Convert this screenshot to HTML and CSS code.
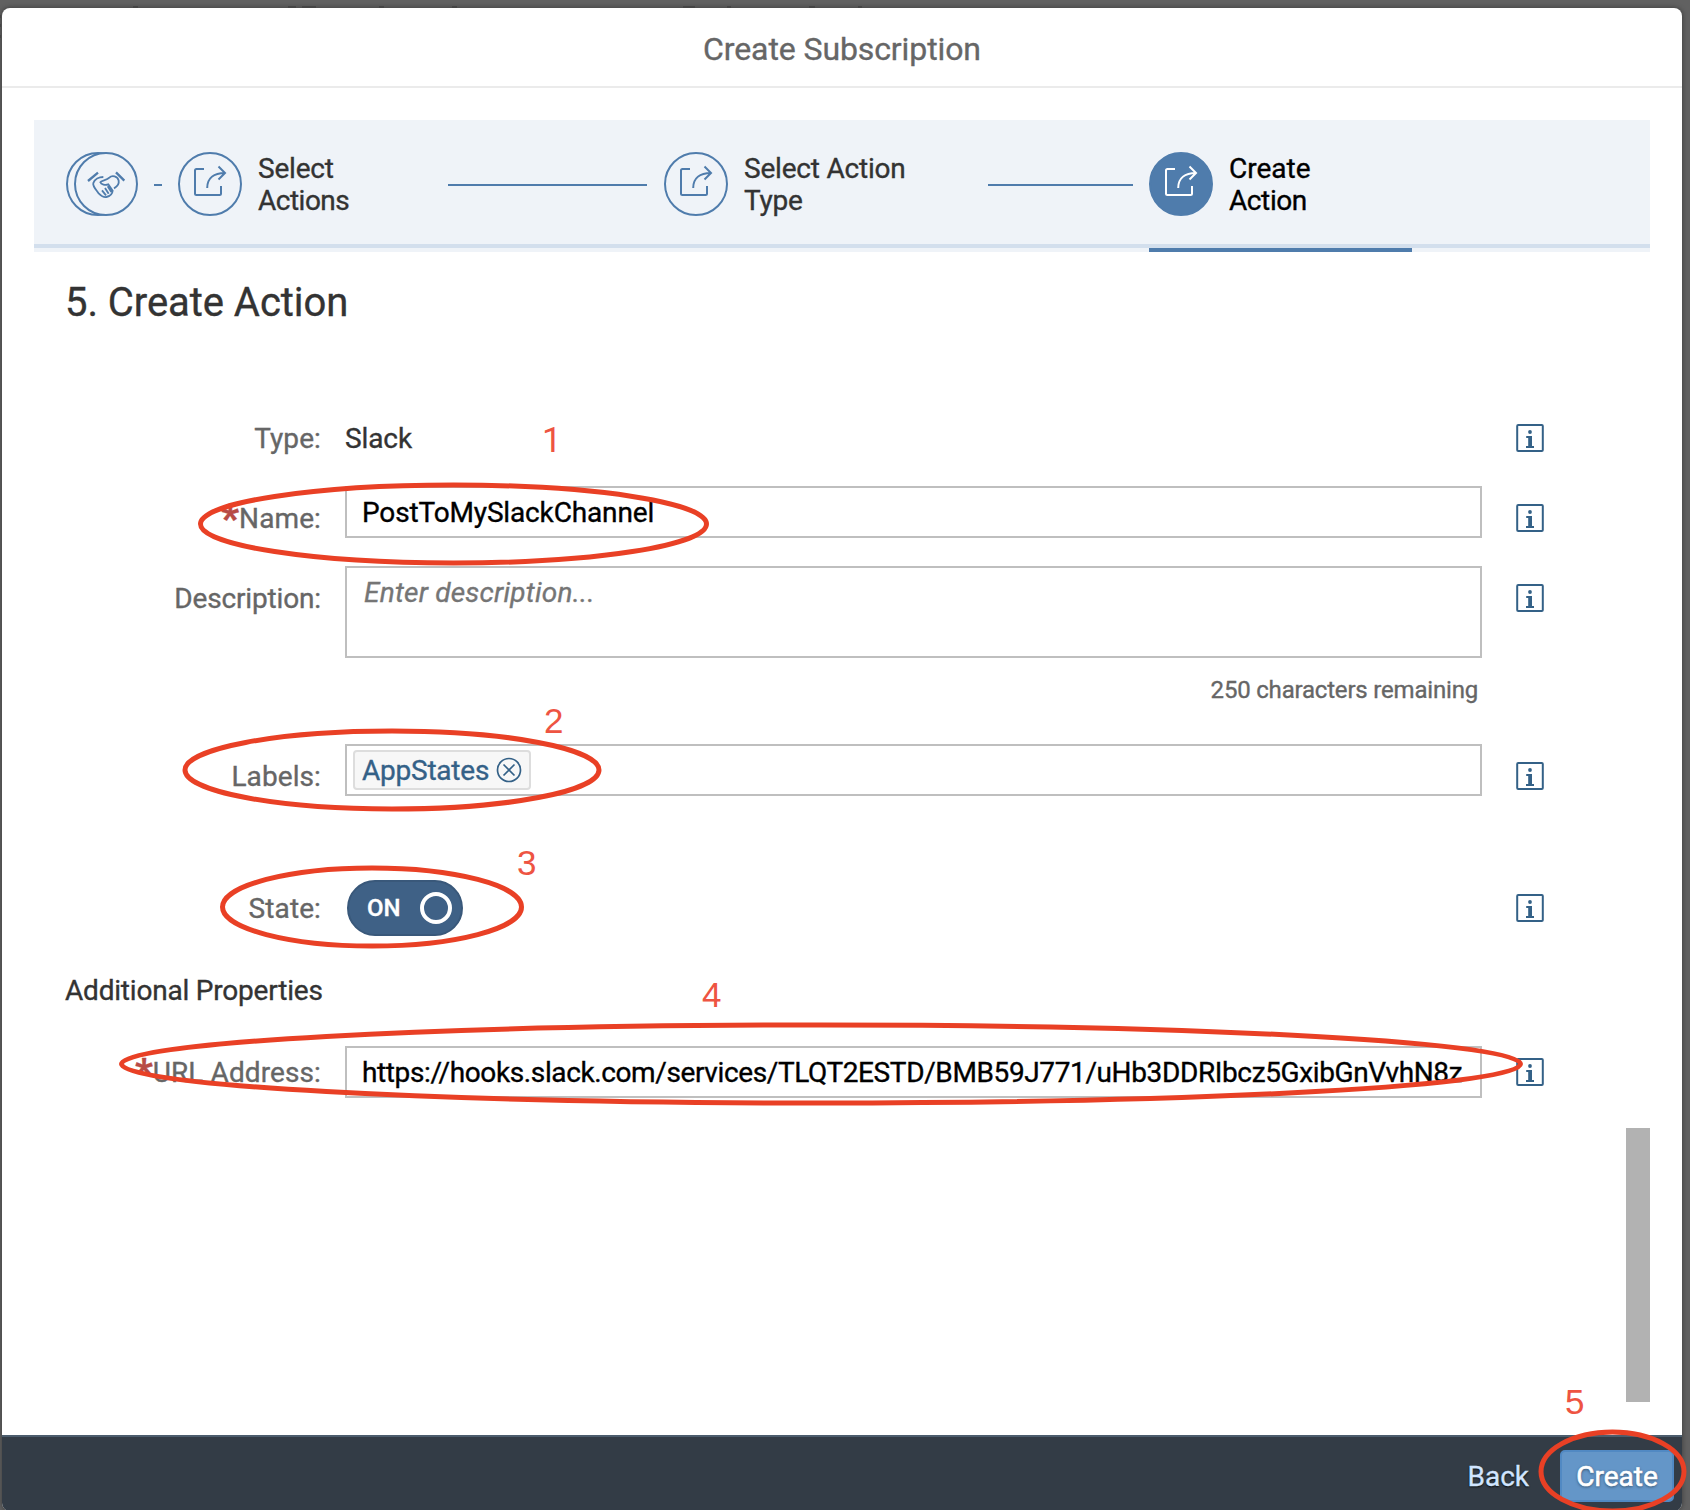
FILE: index.html
```html
<!DOCTYPE html>
<html lang="en">
<head>
<meta charset="utf-8">
<title>Create Subscription</title>
<link rel="stylesheet" href="styles.css">
</head>
<body>
<svg width="0" height="0" class="defs">
  <symbol id="share" viewBox="0 0 64 64">
    <path d="M26 17H18.5a1.5 1.5 0 0 0-1.5 1.5V41.500a1.500 1.500 0 0 0 1.500 1.500H41.500a1.500 1.500 0 0 0 1.500-1.500V34"/>
    <path d="M29.200 36C29.200 26 36 21 47 21M40.500 14.500L47 21L40.500 27.500"/>
  </symbol>
  <symbol id="info" viewBox="0 0 28 28">
    <rect x="1.200" y="1" width="25.600" height="26" rx="1"/>
    <circle class="solid" cx="14" cy="8" r="1.900"/>
    <path class="solid" d="M10.200 12h5.800v10h2v2h-8v-2h2.200v-8h-2z"/>
  </symbol>
</svg>
<div class="dialog">
  <header class="dialog-head">Create Subscription</header>
  <main class="content">
    <nav class="wizard">
      <span class="stack">
        <span class="step-icon back"></span>
        <span class="step-icon front">
          <svg viewBox="0 0 192 192" class="hands">
            <path class="cuff" d="M42 87L72 62M126 61L151 86"/>
            <path d="M88 75C75 75 62 82 58 93C55 102 65 112 74 124C82 132 89 137 97 135C107 133 115 126 116 116L103 97C94 101 81 97 79 91C81 84 98 86 106 77C114 69 131 72 134 86C136 97 129 104 120 109M84 115L96 130M93 108L104 125M101 103L112 120"/>
          </svg>
        </span>
      </span>
      <span class="line dash"></span>
      <span class="step-icon"><svg><use href="#share"/></svg></span>
      <span class="step-text first">Select<br><span class="tight">Actions</span></span>
      <span class="line long"></span>
      <span class="step-icon"><svg><use href="#share"/></svg></span>
      <span class="step-text second">Select Action<br>Type</span>
      <span class="line mid"></span>
      <span class="current">
        <span class="step-icon filled"><svg><use href="#share"/></svg></span>
        <span class="step-text">Create<br><span class="tight">Action</span></span>
      </span>
    </nav>
    <h1>5. Create Action</h1>
    <section class="form">
      <div class="row type">
        <span class="label">Type:</span><span class="value">Slack</span><svg class="info"><use href="#info"/></svg>
      </div>
      <div class="row name">
        <span class="label"><b>*</b>Name:</span><div class="field input post">PostToMySlackChannel</div><svg class="info"><use href="#info"/></svg>
      </div>
      <div class="row desc">
        <span class="label tight-label">Description:</span>
        <div><div class="field area">Enter description...</div><div class="counter">250 characters remaining</div></div>
        <svg class="info"><use href="#info"/></svg>
      </div>
      <div class="row labels">
        <span class="label">Labels:</span>
        <div class="field tokens"><span class="token">AppStates<svg viewBox="0 0 26 26"><circle cx="13" cy="13" r="11.500"/><path d="M7.500 7.500l11 11M18.500 7.500l-11 11"/></svg></span></div>
        <svg class="info"><use href="#info"/></svg>
      </div>
      <div class="row state">
        <span class="label">State:</span>
        <div><div class="switch">ON<span class="knob"></span></div></div>
        <svg class="info"><use href="#info"/></svg>
      </div>
      <h2>Additional Properties</h2>
      <div class="row address">
        <span class="label"><b>*</b>URL Address:</span><div class="field input url">https://hooks.slack.com/services/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</div><svg class="info"><use href="#info"/></svg>
      </div>
    </section>
    <div class="scroll-thumb"></div>
  </main>
  <footer class="dialog-foot">
    <span class="btn">Back</span>
    <span class="btn primary">Create</span>
  </footer>
</div>
<svg class="annotations" viewBox="0 0 1690 1510">
  <path class="behind" d="M133 7h5M288 7h8M302 7h14M379 7h5M452 7h5M683 7h12M727 7h4M809 7h6M858 7h4M0 15v3M0 24v3M0 35v3"/>
  <ellipse cx="453.500" cy="524" rx="253" ry="39"/>
  <ellipse cx="392" cy="770" rx="207" ry="39"/>
  <ellipse cx="372" cy="907" rx="149.500" ry="39"/>
  <ellipse cx="821" cy="1064" rx="699.500" ry="39"/>
  <ellipse cx="1612.500" cy="1471.500" rx="71.500" ry="39.500"/>
  <text class="one" x="542" y="452">1</text>
  <text x="544" y="733">2</text>
  <text x="517" y="875">3</text>
  <text x="702" y="1007">4</text>
  <text x="1565" y="1414">5</text>
</svg>
</body>
</html>
```
FILE: styles.css
```css
* { box-sizing: border-box; }

body {
  margin: 0;
  width: 1690px;
  height: 1510px;
  overflow: hidden;
  padding: 8px 8px 0 2px;
  background: #616161;
  font: 28px/32px Roboto, sans-serif;
  color: #333;
  -webkit-text-stroke: .35px currentColor;
}

.defs { position: absolute; }

svg { fill: none; stroke: currentColor; stroke-width: 2; }
.solid { fill: currentColor; stroke: none; }

.dialog {
  display: flex;
  flex-direction: column;
  width: 1680px;
  height: 1503px;
  background: #fff;
  border-radius: 8px;
  overflow: hidden;
  box-shadow: 0 0 4px 1px #444;
}

.dialog-head {
  height: 80px;
  border-bottom: 2px solid #ebebeb;
  text-align: center;
  font-size: 32px;
  line-height: 83px;
  letter-spacing: -.1px;
  color: #666;
}

.content { flex: 1; padding: 32px 32px 0; }

/* wizard progress */
.wizard {
  display: flex;
  align-items: center;
  height: 132px;
  padding: 0 32px 4px;
  background: linear-gradient(#eff3f8 124px, #d3dfed 124px, #d3dfed 128px, #eff3f8 128px);
  color: #4f7cac;
}

.step-icon {
  display: block;
  flex: none;
  width: 64px;
  height: 64px;
  border-radius: 50%;
  border: 2px solid #4f7cac;
}
.step-icon svg { display: block; width: 64px; height: 64px; margin: -2px; }

.stack { display: flex; width: 72px; }
.front { margin-left: -56px; background: #eff3f8; }
.hands { stroke-width: 5.500; }
.cuff { stroke-width: 7; }
.filled { background: #4f7cac; color: #fff; }

.line { flex: none; height: 2px; background: #4f7cac; margin-top: 2px; }
.dash { width: 8px; margin-left: 16px; margin-right: 16px; }
.long { width: 199px; margin-right: 17px; }
.mid { width: 145px; margin-right: 16px; }

.step-text { margin-left: 16px; padding-top: 2px; color: #333; letter-spacing: -.2px; }
.tight { letter-spacing: -.500px; }
.first { width: 190px; }
.second { width: 244px; }

.current {
  display: flex;
  align-items: center;
  align-self: stretch;
  width: 263px;
  margin-bottom: -4px;
  border-bottom: 4px solid #4f7cac;
}
.current .step-text { color: #000; letter-spacing: 0; }
.current .tight { letter-spacing: -.400px; }

h1 {
  margin: 27px 0 0 31px;
  font-size: 40px;
  line-height: 48px;
  font-weight: 400;
  letter-spacing: -.050px;
}

/* form */
.form { width: 1512px; padding-top: 79px; }

.row {
  display: grid;
  grid-template-columns: 287px 1137px 28px;
  column-gap: 24px;
}
.info { display: block; width: 28px; height: 28px; margin: 18px 0 0 9.500px; color: #346187; }
.label { padding-top: 17px; text-align: right; color: #666; letter-spacing: .1px; }
.tight-label { letter-spacing: -.150px; }
.label b {
  display: inline-block;
  height: 24px;
  color: #b84b46;
  font: 900 38px/38px Roboto, sans-serif;
  vertical-align: top;
  margin-top: -3px;
}
.value { padding-top: 17px; letter-spacing: -.1px; }

.type, .name { height: 80px; }
.desc { height: 178px; }
.labels { height: 132px; }
.state { height: 90px; }

.field { height: 52px; padding: 0 15px; border: 2px solid #bfbfbf; background: #fff; }
.input { color: #000; white-space: nowrap; }
.post { line-height: 49px; letter-spacing: -.150px; }
.url { line-height: 49px; letter-spacing: -.380px; }
.area { height: 92px; padding: 9px 17px 0; font-style: italic; color: #757575; letter-spacing: .230px; }
.counter { margin: 18px 4px 0; text-align: right; font-size: 24px; line-height: 28px; color: #666; letter-spacing: -.190px; }

.tokens { padding: 4px 6px; }
.token {
  display: flex;
  align-items: center;
  width: 178px;
  height: 40px;
  padding: 1px 0 0 7px;
  gap: 7px;
  border: 2px solid #ddd;
  border-radius: 4px;
  background: #f7f7f7;
  color: #346187;
  letter-spacing: -.230px;
}
.token svg { width: 26px; height: 26px; margin-top: -2px; stroke-width: 1.700; }

.switch {
  display: flex;
  align-items: center;
  width: 116px;
  height: 56px;
  margin: 4px 0 0 2px;
  padding-left: 18px;
  border: 2px solid #39587a;
  border-radius: 28px;
  background: #3f6186;
  color: #fff;
  font-size: 24px;
  font-weight: 500;
}
.knob { width: 32px; height: 32px; margin-left: 19px; border: 4px solid #fff; border-radius: 50%; }

h2 { margin: 9px 0 39px 31px; font-size: 28px; line-height: 32px; font-weight: 400; letter-spacing: -.200px; }

.address .label { padding-top: 11px; }
.address .info { margin-top: 12px; }

.scroll-thumb { width: 24px; height: 274px; margin: 30px 0 0 auto; background: #b2b2b2; }

.dialog-foot {
  display: flex;
  justify-content: flex-end;
  height: 76px;
  padding: 13px 8px 0;
  border-top: 2px solid #4c5d6d;
  background: #333c46;
}
.btn { height: 52px; padding: 0 31px; line-height: 53px; color: #d1e5ff; text-shadow: 0 1px 2px #000; }
.primary {
  width: 114px;
  padding: 0;
  text-align: center;
  border: 2px solid #5189c3;
  border-radius: 5px;
  background: #6496c8;
  color: #fff;
  line-height: 49px;
  -webkit-text-stroke-width: .600px;
  text-shadow: 0 1px 3px #0008;
}

/* numbered callouts drawn over the dialog */
.annotations { position: absolute; left: 0; top: 0; width: 1690px; height: 1510px; }
.annotations ellipse { stroke: #e94025; stroke-width: 5; }
.annotations text { fill: #ee5442; stroke: none; -webkit-text-stroke: 0; font: 35px "Liberation Sans", sans-serif; }
.annotations .one { font-family: Roboto, sans-serif; }
.behind { stroke: #454545; }
```
